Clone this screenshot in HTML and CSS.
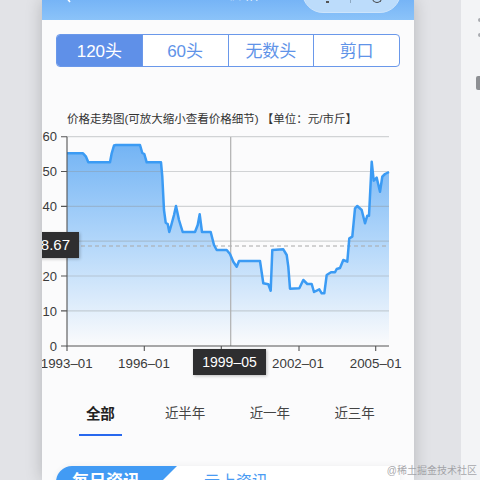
FILE: index.html
```html
<!DOCTYPE html>
<html lang="zh-CN">
<head>
    <meta charset="UTF-8">
    <title>价格走势</title>
    <link rel="stylesheet" href="styles.css">
</head>
<body>
    <div class="page">
        <div class="phone">
            <div class="header">
                <svg class="back" width="6" height="3" viewBox="0 0 6 3"><path d="M0 -3 L4 2" fill="none" stroke="#fff" stroke-width="1.6"/></svg>
                <div class="title">土地价格</div>
                <div class="capsule">
                    <span class="dots"></span>
                    <span class="sep"></span>
                    <span class="ring"></span>
                </div>
            </div>

            <div class="segments">
                <div class="seg active">120头</div>
                <div class="seg">60头</div>
                <div class="seg">无数头</div>
                <div class="seg">剪口</div>
            </div>

            <div class="chart-title">价格走势图(可放大缩小查看价格细节) 【单位：元/市斤】</div>

            <div class="chart">
                <svg width="372" height="250" viewBox="42 120 372 250">
                    <defs>
                        <linearGradient id="area" gradientUnits="userSpaceOnUse" x1="0" y1="140" x2="0" y2="346">
                            <stop offset="0" stop-color="#70b2f4"/>
                            <stop offset="0.5" stop-color="#b3d7fa"/>
                            <stop offset="1" stop-color="#fbfbfc"/>
                        </linearGradient>
                    </defs>
                    <path fill="url(#area)" d="M67 153.300 L83 153.300 L86 156.700 L88.300 162.300 L110 162.300 L111.700 153.300 L114 145.500 L116 145 L140 145 L142.300 153 L144.300 154 L146.700 162.300 L161 162.300 L162.300 176.700 L164 210 L165.700 222.700 L167.700 224 L169.300 232 L171.300 225 L174 215 L176 206 L179 220 L182.700 232 L195 232 L197.700 225 L199.700 214.300 L202 232 L210.700 232 L214 245 L216.700 250 L226.700 250 L230 254 L233.300 261.700 L236.700 266.700 L239 261 L260 261 L263.300 283.300 L268.300 284.300 L270.700 290.700 L272.300 250 L283.300 249.300 L286.700 255 L288.300 266.700 L290 288.700 L299.300 288.300 L303.300 280 L307.300 284 L311.700 284 L314 292 L319.300 289.300 L321.700 293.300 L324.300 293.300 L326.700 275 L331 272.300 L335 272.300 L336.700 269 L340 268 L343.300 260 L347.300 261.700 L349.300 238.300 L352.300 236.700 L355 208.300 L357.300 206 L361.700 210 L365 223.300 L367.300 215.700 L369 215.700 L371.700 161.700 L373.700 180.700 L376.700 177.700 L380 191.700 L382.300 176.700 L385 174 L389 172 L389 346 L67 346 Z"/>
                    <g stroke="#8e9297" stroke-opacity="0.38" stroke-width="1.2">
                        <line x1="67" y1="136.700" x2="389" y2="136.700"/>
                        <line x1="67" y1="171.500" x2="389" y2="171.500"/>
                        <line x1="67" y1="206.400" x2="389" y2="206.400"/>
                        <line x1="67" y1="241.200" x2="389" y2="241.200"/>
                        <line x1="67" y1="276" x2="389" y2="276"/>
                        <line x1="67" y1="310.900" x2="389" y2="310.900"/>
                    </g>
                    <line x1="67" y1="246" x2="389" y2="246" stroke="#a8a8a8" stroke-dasharray="4 3"/>
                    <line x1="230.700" y1="137" x2="230.700" y2="346" stroke="#b0b0b0" stroke-width="1.2"/>
                    <path fill="none" stroke="#3b9bf4" stroke-width="2.500" stroke-linejoin="round" d="M67 153.300 L83 153.300 L86 156.700 L88.300 162.300 L110 162.300 L111.700 153.300 L114 145.500 L116 145 L140 145 L142.300 153 L144.300 154 L146.700 162.300 L161 162.300 L162.300 176.700 L164 210 L165.700 222.700 L167.700 224 L169.300 232 L171.300 225 L174 215 L176 206 L179 220 L182.700 232 L195 232 L197.700 225 L199.700 214.300 L202 232 L210.700 232 L214 245 L216.700 250 L226.700 250 L230 254 L233.300 261.700 L236.700 266.700 L239 261 L260 261 L263.300 283.300 L268.300 284.300 L270.700 290.700 L272.300 250 L283.300 249.300 L286.700 255 L288.300 266.700 L290 288.700 L299.300 288.300 L303.300 280 L307.300 284 L311.700 284 L314 292 L319.300 289.300 L321.700 293.300 L324.300 293.300 L326.700 275 L331 272.300 L335 272.300 L336.700 269 L340 268 L343.300 260 L347.300 261.700 L349.300 238.300 L352.300 236.700 L355 208.300 L357.300 206 L361.700 210 L365 223.300 L367.300 215.700 L369 215.700 L371.700 161.700 L373.700 180.700 L376.700 177.700 L380 191.700 L382.300 176.700 L385 174 L389 172"/>
                    <g stroke="#555" stroke-width="1.1" fill="none">
                        <path d="M67 136.700 V346 H389"/>
                        <path d="M61 136.700 H67 M61 171.500 H67 M61 206.400 H67 M61 276 H67 M61 310.900 H67 M61 346 H67"/>
                        <path d="M67 346 V351 M144.300 346 V351 M221.300 346 V351 M299 346 V351 M375.700 346 V351"/>
                    </g>
                    <g class="axis-y">
                        <text x="57" y="141.300">60</text>
                        <text x="57" y="176">50</text>
                        <text x="57" y="211">40</text>
                        <text x="57" y="280.600">20</text>
                        <text x="57" y="315.500">10</text>
                        <text x="57" y="350.600">0</text>
                    </g>
                    <g class="axis-x">
                        <text x="66.700" y="367.500">1993–01</text>
                        <text x="144" y="367.500">1996–01</text>
                        <text x="298" y="367.500">2002–01</text>
                        <text x="375.700" y="367.500">2005–01</text>
                    </g>
                </svg>
                <div class="tip tip-y">28.67</div>
                <div class="tip tip-x">1999–05</div>
            </div>

            <div class="ranges">
                <div class="range on">全部</div>
                <div class="range">近半年</div>
                <div class="range">近一年</div>
                <div class="range">近三年</div>
            </div>

            <div class="news-tabs">
                <div class="news-tab first">每日资讯</div>
                <div class="news-tab">云上资讯</div>
            </div>
        </div>
        <div class="side">
            <span class="side-dot"></span>
            <span class="side-dot"></span>
            <span class="side-mark"></span>
        </div>
    </div>
    <div class="watermark">@稀土掘金技术社区</div>
</body>
</html>
```

FILE: styles.css
```css
* { box-sizing: border-box; }
html, body { margin: 0; height: 480px; overflow: hidden; }
body { font-family: "Liberation Sans", "Noto Sans CJK SC", sans-serif; background: #e2e3e7; position: relative; }
.page { display: flex; height: 480px; padding-left: 42px; }
.phone { flex: none; width: 372px; height: 480px; background: #fbfbfc; overflow: hidden; box-shadow: 0 0 16px rgba(0, 0, 0, 0.2); }
.side { margin-left: 47px; flex: 1; min-width: 0; overflow: hidden; background: #f3f4f6; padding: 18px 0 0 17px; display: flex; flex-direction: column; gap: 11px; align-items: flex-start; }
.side-dot { flex: none; width: 4px; height: 4px; border-radius: 50%; background: #a9abb0; }
.side-mark { flex: none; width: 4px; height: 14px; margin: 28px 0 0 -2px; border-radius: 2px 0 0 2px; background: #8d8f93; }

.header { height: 20px; background: linear-gradient(#76b4f6, #8bc3f9); display: flex; justify-content: center; position: relative; }
.back { position: absolute; top: 0; left: 24px; }
.title { color: #fff; font-size: 15.5px; line-height: 16px; margin-top: -14px; }
.capsule { position: absolute; left: 260px; top: -30px; width: 99px; height: 43px; border-radius: 21px; background: #bcdcfb; border: 1px solid #cde4fb; display: flex; align-items: flex-end; justify-content: space-between; padding: 0 18px 9px 23px; }
.dots { width: 3px; height: 2px; background: #555; }
.sep { width: 1px; height: 3px; background: #8ea9c2; }
.ring { width: 10px; height: 5px; border: 1.5px solid #444; border-top: none; border-radius: 0 0 6px 6px; }

.segments { display: flex; margin: 14px 14px 0; height: 33px; border: 1px solid #6a98ea; border-radius: 4px; overflow: hidden; background: #fff; }
.seg { flex: 1; border-left: 1px solid #6a98ea; color: #5f93e8; font-size: 17px; padding-bottom: 2px; display: flex; align-items: center; justify-content: center; }
.seg:first-child { border-left: none; }
.seg.active { background: #5f90e8; color: #fff; }

.chart-title { margin: 45px 0 0 25px; height: 14px; font-size: 11.5px; line-height: 14px; color: #333; white-space: nowrap; }
.chart { position: relative; height: 250px; margin-top: -6px; }
.chart svg { display: block; }
.axis-y text { font-size: 13px; fill: #3a3a3a; text-anchor: end; }
.axis-x text { font-size: 13.3px; fill: #3a3a3a; text-anchor: middle; }
.tip { position: absolute; background: #2e2e30; color: #fff; height: 26px; line-height: 26px; box-shadow: 1px 1px 3px rgba(0, 0, 0, 0.25); }
.tip-y { left: -12px; top: 112px; width: 49px; padding-right: 9px; text-align: right; font-size: 15px; }
.tip-x { left: 151px; top: 229px; width: 73px; text-align: center; font-size: 14px; }

.ranges { display: flex; margin: 35px 17px 0 16px; }
.range { flex: 1; text-align: center; font-size: 13.5px; line-height: 18px; color: #444; }
.range.on { color: #222; font-size: 14.5px; font-weight: bold; }
.range.on::after { content: ""; display: block; width: 43px; height: 2px; margin: 11px auto 0; background: #2868ee; }

.news-tabs { display: flex; margin: 30px 14px 0; height: 40px; background: #fff; border-radius: 16px 0 0 0; overflow: hidden; box-shadow: 0 0 6px rgba(0, 0, 0, 0.06); }
.news-tab { font-size: 16px; line-height: 24px; padding: 4px 0 0 27px; color: #4a9bf3; }
.news-tab.first { width: 121px; padding-left: 16px; font-size: 17px; background: #429bf4; color: #fff; font-weight: bold; clip-path: polygon(0 0, 100% 0, calc(100% - 40px) 100%, 0 100%); }

.watermark { position: absolute; right: 3px; top: 464px; font-size: 10px; line-height: 14px; color: rgba(150, 150, 155, 0.85); }
```
